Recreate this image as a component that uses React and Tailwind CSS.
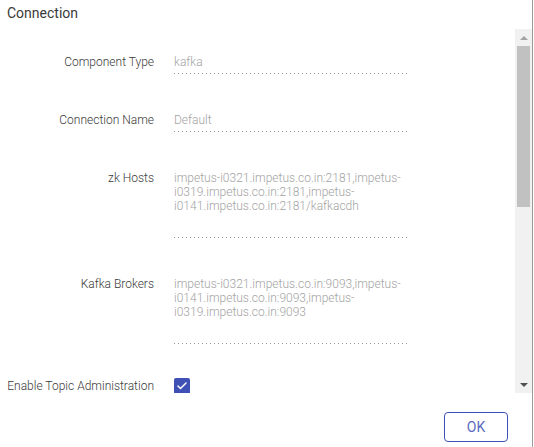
import { Check } from "lucide-react";

const fields = [
  { label: "Component Type", value: "kafka" },
  { label: "Connection Name", value: "Default" },
  {
    label: "zk Hosts",
    value: "impetus-i0321.impetus.co.in:2181,impetus-i0319.impetus.co.in:2181,impetus-i0141.impetus.co.in:2181/kafkacdh",
    multi: true,
  },
  {
    label: "Kafka Brokers",
    value: "impetus-i0321.impetus.co.in:9093,impetus-i0141.impetus.co.in:9093,impetus-i0319.impetus.co.in:9093",
    multi: true,
  },
];

function Field({ label, value, multi }) {
  return (
    <div className="flex mb-[39px]">
      <div className="w-[154px] shrink-0 text-right text-[12px] leading-[14px] font-light text-[#3a3a3a]">{label}</div>
      <div className="ml-[20px] w-[233px]">
        {/* disabled material style input, text is greyed out */}
        <div className={`text-[12px] leading-[14px] font-light text-[#a3a3a3] ${multi ? "h-[66px]" : "pb-[4px]"}`}>{value}</div>
        <div className="h-px bg-[linear-gradient(to_right,rgba(0,0,0,0.42)_33%,transparent_0%)] bg-[length:4px_1px] bg-repeat-x" />
      </div>
    </div>
  );
}

export default function App() {
  return (
    <div className="w-[534px] h-[447px] bg-white font-['Roboto',sans-serif] flex">
      <div className="w-[533px] h-full border-r border-[#9a9a9a] flex flex-col">
        <div className="h-[29px] pl-[7px] pt-[3px] text-[14px] leading-[20px] text-[#3a3a3a]">Connection</div>

        <div className="h-[364px] flex">
          <div className="flex-1 pt-[26px] overflow-hidden">
            {fields.map((f) => (
              <Field key={f.label} {...f} />
            ))}
            <div className="flex items-center -mt-[5px]">
              <div className="w-[154px] shrink-0 text-right text-[12px] leading-[14px] font-light text-[#3a3a3a]">Enable Topic Administration</div>
              <div className="ml-[20px] w-[16px] h-[16px] rounded-[2px] bg-[#3f51b5] flex items-center justify-center">
                <Check className="w-[12px] h-[12px] text-white" strokeWidth={3} />
              </div>
            </div>
          </div>

          {/* scrollbar */}
          <div className="w-[17px] h-full bg-[#f1f1f1] flex flex-col">
            <div className="h-[17px] flex items-center justify-center">
              <div className="w-0 h-0 border-x-[4px] border-x-transparent border-b-[4px] border-b-[#a3a3a3]" />
            </div>
            <div className="h-[161px] mx-[2px] bg-[#c1c1c1]" />
            <div className="flex-1" />
            <div className="h-[17px] flex items-center justify-center">
              <div className="w-0 h-0 border-x-[4px] border-x-transparent border-t-[4px] border-t-[#505050]" />
            </div>
          </div>
        </div>

        <div className="flex-1 flex justify-end items-start pt-[19px] pr-[24px]">
          <button className="w-[64px] h-[30px] rounded-[4px] border border-[#3f51b5] text-[#5c6bc0] text-[14px]">OK</button>
        </div>
      </div>
    </div>
  );
}
